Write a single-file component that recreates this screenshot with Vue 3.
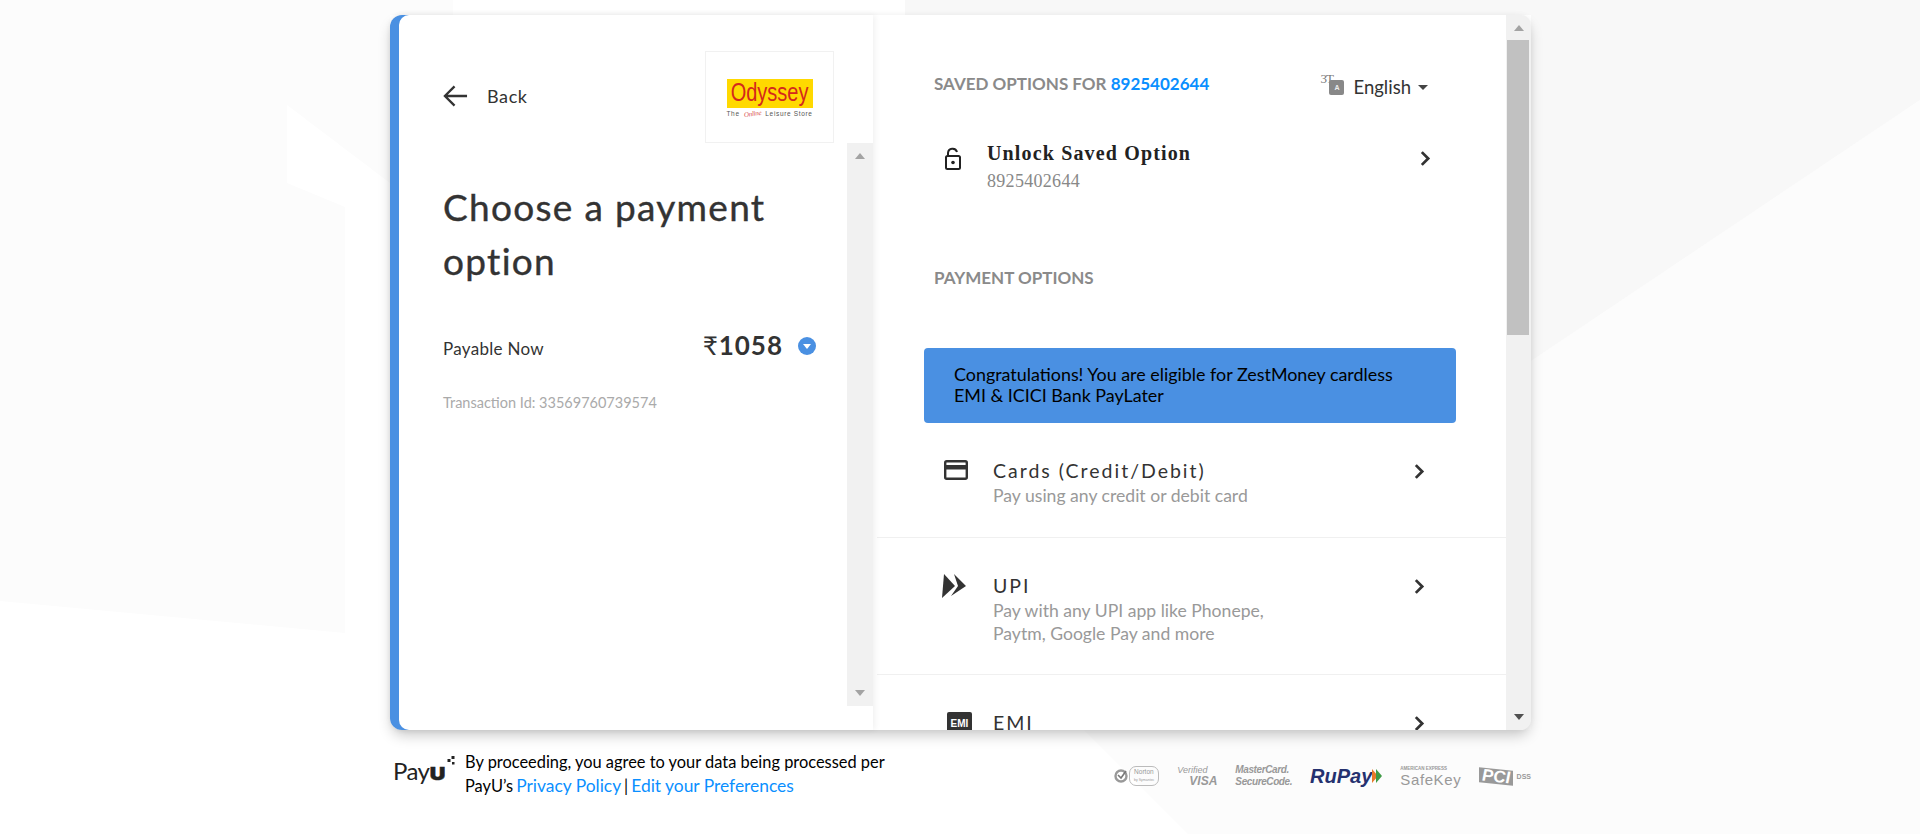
<template>
  <div class="page">
    <svg class="bg" viewBox="0 0 1920 834" preserveAspectRatio="none">
      <polygon points="0,0 453,0 453,15 390,15 390,183 287,105 287,183 345,207 345,633 0,601" fill="#fcfcfc" />
      <polygon points="1084,730 1188,834 1920,834 1920,100 1531,361 1531,730" fill="#fcfcfc" />
      <polygon points="905,0 1920,0 1920,100 1531,361 1531,15 905,15" fill="#f8f8f8" />
    </svg>

    <div class="wrap">
      <div class="card">
        <section class="left">
          <div class="left-inner">
            <div class="left-top">
              <div class="back">
                <svg class="back-icon" viewBox="0 0 26 24">
                  <path d="M12 2 L2 12 L12 22 M2 12 H25" fill="none" stroke="#333" stroke-width="2.4" />
                </svg>
                <span>Back</span>
              </div>
              <div class="logo">
                <div class="logo-name"><span>Odyssey</span></div>
                <div class="logo-tag"><span>The</span><i>Online</i><span>Leisure Store</span></div>
              </div>
            </div>
            <div class="left-body">
              <div class="left-content">
                <h1>Choose a payment option</h1>
                <div class="pay-row">
                  <span class="pay-label">Payable Now</span>
                  <span class="amount"><span class="rupee">₹</span>1058</span>
                  <span class="caret-dot"></span>
                </div>
                <div class="txn">Transaction Id: 33569760739574</div>
              </div>
              <div class="scroll scroll-left">
                <span class="arrow-up"></span>
                <span class="arrow-down"></span>
              </div>
            </div>
          </div>
        </section>

        <section class="right">
          <div class="right-content">
            <div class="saved-head">
              <div class="label">SAVED OPTIONS FOR <span class="blue">8925402644</span></div>
              <div class="lang">
                <span class="lang-icon"><i>3T</i><b>A</b></span>
                <span>English</span>
                <span class="lang-caret"></span>
              </div>
            </div>
            <div class="unlock">
              <svg class="lock" viewBox="0 0 18 24">
                <path d="M4 9 V6 a4.6 4.6 0 0 1 9 -1" fill="none" stroke="#222" stroke-width="2" />
                <rect x="2" y="9" width="14" height="13" rx="1.5" fill="none" stroke="#222" stroke-width="2" />
                <circle cx="9" cy="15.5" r="1.8" fill="#222" />
              </svg>
              <div class="unlock-text">
                <div class="unlock-title">Unlock Saved Option</div>
                <div class="unlock-num">8925402644</div>
              </div>
              <svg class="chev" viewBox="0 0 10 16"><path d="M2 2 L8 8 L2 14" /></svg>
            </div>
            <div class="label pay-options">PAYMENT OPTIONS</div>
            <div class="banner">Congratulations! You are eligible for ZestMoney cardless EMI &amp; ICICI Bank PayLater</div>

            <div class="option" v-for="opt in options" :key="opt.title" :class="opt.cls">
              <div class="opt-icon">
                <svg v-if="opt.icon === 'card'" viewBox="0 0 24 20" width="24" height="20">
                  <rect x="1.2" y="1.2" width="21.6" height="17.6" rx="1.5" fill="none" stroke="#333" stroke-width="2.4" />
                  <rect x="1" y="5" width="22" height="4.5" fill="#333" />
                </svg>
                <svg v-else-if="opt.icon === 'upi'" class="upi-icon" viewBox="0 0 25 24" width="25" height="24">
                  <polygon points="2,0 13,12 0,24" fill="#333" />
                  <polygon points="12,0 24,12 9,22 16,12" fill="#333" />
                </svg>
                <span v-else class="emi-icon">EMI</span>
              </div>
              <div class="opt-text">
                <div class="opt-title">{{ opt.title }}</div>
                <div class="opt-sub" v-if="opt.sub">{{ opt.sub }}</div>
              </div>
              <svg class="chev" viewBox="0 0 10 16"><path d="M2 2 L8 8 L2 14" /></svg>
            </div>
          </div>
          <div class="scroll scroll-right">
            <span class="arrow-up"></span>
            <span class="thumb"></span>
            <span class="arrow-down dark"></span>
          </div>
        </section>
      </div>

      <footer class="foot">
        <div class="payu">
          <span>Pay</span><b>U</b>
          <svg viewBox="0 0 8 10" width="8" height="10"><rect x="4.5" y="0" width="3" height="3" fill="#222"/><rect x="0.5" y="3" width="3" height="3" fill="#222"/><rect x="5" y="6" width="2.5" height="2.5" fill="#222"/></svg>
        </div>
        <div class="consent">
          <div>By proceeding, you agree to your data being processed per</div>
          <div class="consent-links"><span>PayU’s</span><a>Privacy Policy</a><span>|</span><a>Edit your Preferences</a></div>
        </div>
        <div class="badges">
          <div class="badge norton">
            <svg viewBox="0 0 14 14" width="14" height="14"><circle cx="7" cy="7" r="5.5" fill="none" stroke="#999" stroke-width="2.4"/><path d="M4 6 L7 9 L12 2" fill="none" stroke="#777" stroke-width="1.6"/></svg>
            <span class="norton-txt">Norton<br><small>by Symantec</small></span>
          </div>
          <div class="badge visa"><i>Verified</i><b>VISA</b></div>
          <div class="badge mc"><b>MasterCard.</b><b>SecureCode.</b></div>
          <div class="badge rupay"><span>RuPay</span><svg viewBox="0 0 10 14" width="10" height="14"><polygon points="0,0 6,7 0,14" fill="#e8792b"/><polygon points="4,0 10,7 4,14" fill="#3f9b46"/></svg></div>
          <div class="badge safekey"><small>AMERICAN EXPRESS</small><span>SafeKey</span></div>
          <div class="badge pci"><b>PCI</b><span>DSS</span></div>
        </div>
      </footer>
    </div>
  </div>
</template>

<script setup>
const options = [
  { title: "Cards (Credit/Debit)", sub: "Pay using any credit or debit card", icon: "card", cls: "opt-cards" },
  { title: "UPI", sub: "Pay with any UPI app like Phonepe, Paytm, Google Pay and more", icon: "upi", cls: "opt-upi" },
  { title: "EMI", sub: "", icon: "emi", cls: "opt-emi" }
]
</script>

<style>
html, body {
  margin: 0;
  background: #fff;
  overflow: hidden;
}
</style>

<style scoped>
.page {
  position: relative;
  height: 834px;
  overflow: hidden;
  font-family: Lato, "Open Sans", sans-serif;
  color: #333;
}
.bg {
  position: absolute;
  inset: 0;
  width: 1920px;
  height: 834px;
}
.wrap {
  position: relative;
  width: 1141px;
  margin-left: 390px;
  padding-top: 15px;
}
.card {
  display: flex;
  height: 715px;
  background: #fff;
  border-radius: 12px;
  box-shadow: 0 7px 14px -2px rgba(0, 0, 0, 0.22), 0 0 6px rgba(0, 0, 0, 0.04);
}
.left {
  width: 483px;
  flex: none;
  box-sizing: border-box;
  padding-left: 9px;
  background: #4a90e2;
  border-radius: 12px 0 0 12px;
  box-shadow: 2px 0 6px rgba(0, 0, 0, 0.06);
  position: relative;
  z-index: 1;
}
.left-inner {
  height: 100%;
  background: #fff;
  border-radius: 10px 0 0 10px;
  display: flex;
  flex-direction: column;
}
.left-top {
  height: 128px;
  flex: none;
  display: flex;
  justify-content: space-between;
  padding: 36px 39px 0 44px;
  box-sizing: border-box;
}
.back {
  display: flex;
  align-items: center;
  gap: 19px;
  height: 92px;
  font-size: 18px;
  letter-spacing: 0.6px;
  margin-top: -1px;
}
.back-icon {
  width: 25px;
  height: 24px;
}
.logo {
  width: 129px;
  height: 92px;
  box-sizing: border-box;
  border: 1px solid #f1f1f1;
  padding-top: 27px;
  display: flex;
  flex-direction: column;
  align-items: center;
}
.logo-name {
  width: 86px;
  height: 29px;
  background: #ffd900;
  color: #d4281c;
  font: 26px/26px "Liberation Sans", sans-serif;
  text-align: center;
}
.logo-name span {
  display: inline-block;
  transform: scaleX(0.77);
  white-space: nowrap;
  margin-left: -12px;
  margin-right: -12px;
}
.logo-tag {
  width: 86px;
  display: flex;
  justify-content: space-between;
  align-items: center;
  font: 6.5px/10px "Liberation Sans", sans-serif;
  letter-spacing: 0.65px;
  color: #555;
  margin-top: 1px;
  white-space: nowrap;
}
.logo-tag i {
  font: italic 7px/8px "Liberation Serif", serif;
  color: #d9534f;
  letter-spacing: -0.3px;
  transform: rotate(-8deg);
}
.left-body {
  flex: 1;
  display: flex;
  min-height: 0;
}
.left-content {
  flex: 1;
  padding: 37px 31px 0 44px;
}
h1 {
  margin: 0;
  font-size: 37px;
  line-height: 54px;
  font-weight: 400;
  letter-spacing: 1.3px;
  -webkit-text-stroke: 0.4px #333;
  color: #333;
}
.pay-row {
  display: flex;
  align-items: baseline;
  margin-top: 41px;
}
.pay-label {
  font-size: 17px;
  letter-spacing: 0.3px;
}
.amount {
  margin-left: auto;
  font-size: 26px;
  font-weight: 700;
  letter-spacing: 1px;
  margin-bottom: 1px;
}
.rupee {
  font-weight: 400;
}
.caret-dot {
  width: 18px;
  height: 18px;
  margin-left: 15px;
  border-radius: 50%;
  background: #4a90e2;
  align-self: center;
  position: relative;
}
.caret-dot::after {
  content: "";
  position: absolute;
  left: 5px;
  top: 7px;
  border: 4px solid transparent;
  border-top: 5px solid #fff;
  border-bottom: 0;
}
.txn {
  margin-top: 32px;
  font-size: 14.5px;
  color: #aaa;
}
.scroll {
  flex: none;
  background: #f1f1f1;
  position: relative;
}
.scroll-left {
  width: 26px;
  height: 563px;
}
.arrow-up, .arrow-down {
  position: absolute;
  left: 50%;
  margin-left: -5px;
  border-left: 5px solid transparent;
  border-right: 5px solid transparent;
}
.arrow-up {
  top: 10px;
  border-bottom: 6px solid #a3a3a3;
}
.arrow-down {
  bottom: 10px;
  border-top: 6px solid #a3a3a3;
}
.arrow-down.dark {
  border-top-color: #505050;
}
.right {
  flex: 1;
  display: flex;
  min-width: 0;
  overflow: hidden;
  border-radius: 0 10px 10px 0;
  margin-left: 4px;
}
.right-content {
  flex: 1;
  min-width: 0;
  overflow: hidden;
  padding-top: 60px;
}
.scroll-right {
  width: 25px;
}
.thumb {
  position: absolute;
  left: 1px;
  right: 2px;
  top: 25px;
  height: 295px;
  background: #c1c1c1;
}
.saved-head {
  display: flex;
  justify-content: space-between;
  padding: 0 78px 0 57px;
  height: 66px;
}
.label {
  font-size: 17px;
  font-weight: 700;
  color: #8a8a8a;
  line-height: 18px;
}
.blue {
  color: #0a8fff;
}
.lang {
  display: flex;
  align-items: center;
  gap: 9px;
  font-size: 18.5px;
  height: 24px;
}
.lang-icon {
  position: relative;
  width: 24px;
  height: 18px;
}
.lang-icon i {
  position: absolute;
  left: 0;
  top: -6px;
  font: normal 13px/14px "Liberation Serif", serif;
  letter-spacing: -1px;
  color: #777;
}
.lang-icon b {
  position: absolute;
  right: 0;
  top: 2px;
  width: 15px;
  height: 15px;
  background: #888;
  border-radius: 2px;
  color: #eee;
  font: 700 7px/15px "Liberation Sans", sans-serif;
  text-align: center;
}
.lang-caret {
  border-left: 5px solid transparent;
  border-right: 5px solid transparent;
  border-top: 5px solid #444;
  margin-left: -2px;
}
.unlock {
  display: flex;
  align-items: flex-start;
  padding: 0 75px 0 67px;
  height: 62px;
}
.lock {
  width: 18px;
  height: 24px;
  flex: none;
  margin-top: 6px;
}
.unlock-text {
  flex: 1;
  margin-left: 25px;
  font-family: "Liberation Serif", serif;
}
.unlock-title {
  font-size: 20px;
  font-weight: 700;
  letter-spacing: 1.15px;
  line-height: 24px;
  color: #222;
}
.unlock-num {
  font-size: 18px;
  letter-spacing: 0.3px;
  line-height: 24px;
  margin-top: 4px;
  color: #888;
}
.unlock .chev {
  margin-top: 9px;
}
.chev {
  width: 12px;
  height: 17px;
  flex: none;
  fill: none;
  stroke: #333;
  stroke-width: 2.6;
}
.pay-options {
  padding-left: 57px;
  margin-top: 66px;
}
.banner {
  margin: 61px 50px 0 47px;
  height: 75px;
  box-sizing: border-box;
  background: #4a90e2;
  border-radius: 4px;
  color: #000;
  font-size: 17.9px;
  line-height: 21px;
  padding: 16px 40px 0 30px;
}
.option {
  display: flex;
  align-items: flex-start;
  padding: 0 81px 0 67px;
  border-bottom: 1px solid #f0f0f0;
}
.opt-cards {
  padding-top: 37px;
  height: 115px;
  box-sizing: border-box;
}
.opt-upi {
  padding-top: 37px;
  height: 137px;
  box-sizing: border-box;
}
.opt-emi {
  padding-top: 37px;
  height: 100px;
  box-sizing: border-box;
}
.opt-icon {
  width: 49px;
  flex: none;
}
.upi-icon {
  margin-left: -2px;
  margin-top: -1px;
}
.opt-text {
  flex: 1;
}
.opt-title {
  font-size: 19.5px;
  letter-spacing: 2px;
  line-height: 22px;
  color: #333;
}
.opt-sub {
  font-size: 17.6px;
  line-height: 23px;
  color: #999;
  margin-top: 2px;
  width: 300px;
}
.opt-text + .chev {
  margin-top: 3px;
}
.emi-icon {
  display: block;
  width: 25px;
  height: 20px;
  margin-left: 3px;
  background: #333;
  border-radius: 2px;
  color: #fff;
  font: 700 10px/24px "Liberation Sans", sans-serif;
  text-align: center;
}
.foot {
  display: flex;
  align-items: flex-start;
  padding-top: 20px;
}
.payu {
  width: 75px;
  flex: none;
  padding-left: 3px;
  box-sizing: border-box;
  font: 24px/30px Lato, sans-serif;
  letter-spacing: -0.6px;
  color: #222;
  display: flex;
  align-items: baseline;
  margin-top: 6px;
}
.payu b {
  display: inline-block;
  font: 900 18px/30px Inter, sans-serif;
  letter-spacing: 0;
  -webkit-text-stroke: 0.5px #222;
  transform: scaleX(1.2);
  margin: 0 2px;
}
.payu svg {
  align-self: flex-start;
  margin-left: 1px;
}
.consent {
  width: 470px;
  font-size: 16.4px;
  line-height: 24px;
  color: #000;
}
.consent-links {
  display: flex;
  gap: 3px;
}
.consent a {
  color: #0a8fff;
  font-size: 17.4px;
}
.badges {
  margin-left: auto;
  display: flex;
  align-items: center;
  gap: 18px;
  height: 32px;
  margin-top: 10px;
  color: #999;
}
.badge {
  display: flex;
  flex-direction: column;
  line-height: 11px;
  font-family: "Liberation Sans", sans-serif;
}
.norton {
  flex-direction: row;
  align-items: center;
  gap: 1px;
}
.norton-txt {
  font-size: 6.5px;
  line-height: 7px;
  border: 1px solid #bbb;
  border-radius: 7px;
  padding: 1px 4px;
}
.norton-txt small {
  font-size: 3.5px;
}
.visa i {
  font-size: 9px;
}
.visa b {
  font-size: 12px;
  font-style: italic;
  padding-left: 12px;
}
.mc b {
  font-size: 10px;
  font-style: italic;
  letter-spacing: -0.4px;
  line-height: 12px;
}
.rupay {
  flex-direction: row;
  align-items: center;
  color: #25316f;
  font-size: 20px;
  font-weight: 700;
  font-style: italic;
}
.safekey small {
  font-size: 4.5px;
  font-weight: 700;
  line-height: 6px;
}
.safekey span {
  font-size: 15px;
  letter-spacing: 0.6px;
  line-height: 15px;
}
.pci {
  flex-direction: row;
  align-items: center;
  gap: 3px;
}
.pci b {
  font-size: 17px;
  font-style: italic;
  color: #fff;
  background: #999;
  line-height: 15px;
  padding: 0 3px;
  transform: skewY(6deg);
}
.pci span {
  font-size: 7px;
  font-weight: 700;
}
</style>
